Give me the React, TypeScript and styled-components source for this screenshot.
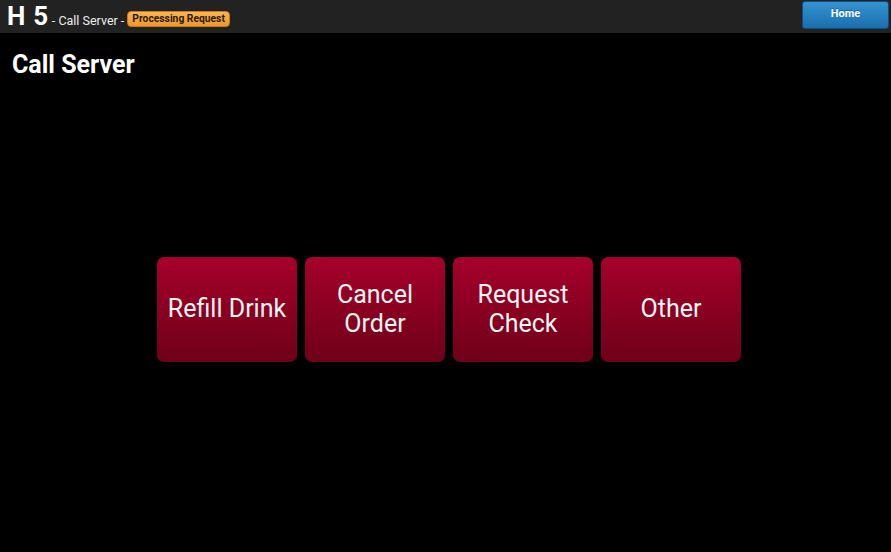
import React from "react";
import styled, { createGlobalStyle } from "styled-components";

const GlobalStyle = createGlobalStyle`
  html, body {
    margin: 0;
    padding: 0;
    background: #000;
    font-family: Roboto, "Noto Sans", sans-serif;
    color: #fff;
  }
`;

const Page = styled.div`
  width: 891px;
  height: 552px;
  background: #000;
  display: flex;
  flex-direction: column;
  overflow: hidden;
`;

const Header = styled.header`
  height: 33px;
  box-sizing: border-box;
  background: #222;
  display: flex;
  align-items: flex-start;
  justify-content: space-between;
  padding: 0 2px 0 7px;
`;

const Crumbs = styled.div`
  display: flex;
  align-items: baseline;
  padding-top: 1px;
`;

const Table = styled.span`
  font-size: 26px;
  font-weight: 700;
  line-height: 30px;
  letter-spacing: 0.7px;
`;

const Sep = styled.span`
  font-size: 12.5px;
  color: #eee;
  margin-left: 3px;
  margin-right: 3px;
`;

const Badge = styled.span`
  align-self: center;
  margin-top: 6px;
  background: linear-gradient(#fbb552, #f0962a);
  color: #2a1a05;
  font-size: 10.3px;
  font-weight: 700;
  padding: 1px 4px;
  border-radius: 4px;
  line-height: 12px;
  border: 1px solid #c77a1c;
`;

const HomeButton = styled.button`
  margin-top: 1px;
  width: 87px;
  height: 28px;
  border: 1px solid #0d4f80;
  border-radius: 3px;
  background: linear-gradient(#3592d0, #1a6fae);
  color: #fff;
  font-family: inherit;
  font-size: 11px;
  font-weight: 700;
  padding: 0 0 4px;
  text-shadow: 0 -1px 0 rgba(0, 0, 0, 0.3);
`;

const Title = styled.h1`
  margin: 18px 0 0 12px;
  font-size: 25px;
  font-weight: 700;
  line-height: 28px;
`;

const Stage = styled.main`
  flex: 1;
  display: flex;
  justify-content: center;
  padding-top: 178px;
  padding-left: 7px;
`;

const Row = styled.div`
  display: flex;
  gap: 8px;
  align-items: flex-start;
`;

const Choice = styled.button`
  width: 140px;
  height: 105px;
  border: none;
  border-radius: 7px;
  background: linear-gradient(#a6002b, #6e0018);
  color: #f4f4f4;
  font-family: inherit;
  font-size: 25px;
  line-height: 29px;
  padding: 0 6px 2px;
  display: flex;
  align-items: center;
  justify-content: center;
  text-align: center;
`;

const choices = [
  ["Refill Drink"],
  ["Cancel", "Order"],
  ["Request", "Check"],
  ["Other"],
];

export default function App() {
  return (
    <>
      <GlobalStyle />
      <Page>
        <Header>
          <Crumbs>
            <Table>H 5</Table>
            <Sep>- Call Server -</Sep>
            <Badge>Processing Request</Badge>
          </Crumbs>
          <HomeButton>Home</HomeButton>
        </Header>
        <Title>Call Server</Title>
        <Stage>
          <Row>
            {choices.map((lines) => (
              <Choice key={lines.join(" ")}>
                <span>
                  {lines.map((l, i) => (
                    <React.Fragment key={l}>
                      {i > 0 && <br />}
                      {l}
                    </React.Fragment>
                  ))}
                </span>
              </Choice>
            ))}
          </Row>
        </Stage>
      </Page>
    </>
  );
}
